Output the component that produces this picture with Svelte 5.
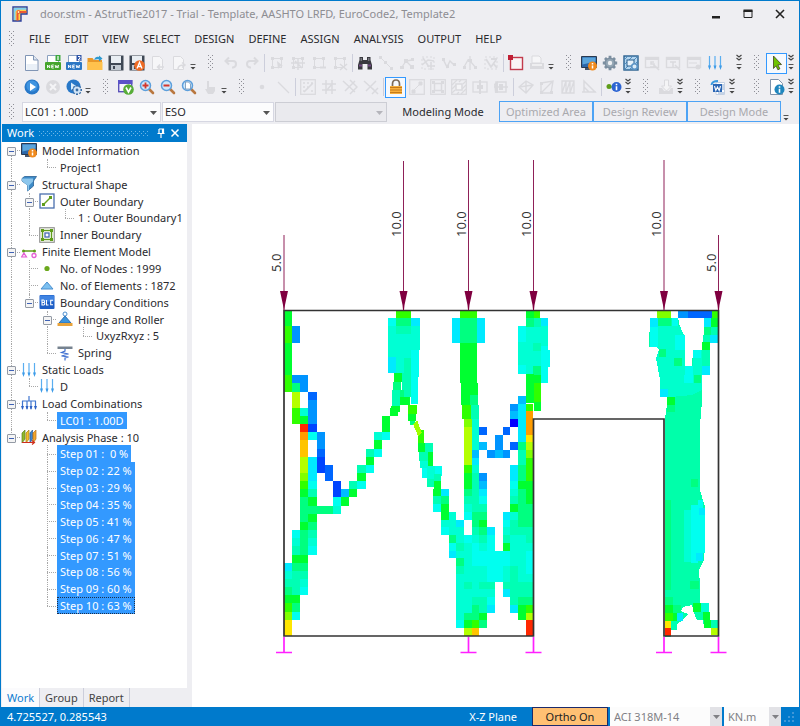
<script>
  const D = '#dadade';
  const arrows3 = '<path d="M2.5 1v12M8 1v12M13.5 1v12" stroke="#5aaef0" stroke-width="1.2"/><path d="M1 10.500h3l-1.500 4.500zM6.500 10.500h3L8 15zM12 10.500h3L13.500 15z" fill="#3d9be8"/>';
  const page = '<path d="M1.500 .5h8l4.500 4.500v10.500H1.500z" fill="#fff" stroke="#8095b5"/><path d="M2.500 9h10.500v6H2.500z" fill="#eaf0f7"/><path d="M9.500 .5v4.500h4.500" fill="#dfe7f2" stroke="#8095b5"/>';
  const folderPage = '<path d="M2.500 .5h8l3 3v6h-11z" fill="#fff" stroke="#8aa0bf"/>';
  const lens = '<path d="M10 10l4 4" stroke="#b9773f" stroke-width="2.600" stroke-linecap="round"/><circle cx="6.500" cy="6.500" r="5" fill="#cfe8fb" stroke="#5d9fdc" stroke-width="1.500"/>';
  const disk = '<path d="M.5 .5h15v15H.5z" fill="#3f4855"/><path d="M3 1h10v7H3z" fill="#e9eef3"/><path d="M3 10h10v5H3z" fill="#c2cad3"/><path d="M5 11h2v3H5z" fill="#3f4855"/>';
  const nodes = `<rect x="3.500" y="3.500" width="9" height="9" fill="none" stroke="${D}"/><path d="M2 2h3v3H2zM11 2h3v3h-3zM2 11h3v3H2z" fill="${D}"/>`;
  const win = `<rect x="1.500" y="2.500" width="13" height="10" fill="none" stroke="${D}" stroke-width="1.400"/><path d="M1 2h14v3H1z" fill="${D}"/>`;
  const frame = `<rect x=".7" y=".7" width="14.600" height="14.600" fill="none" stroke="${D}" stroke-width="1.300"/>`;
  const newTag = '<path d="M2.500 13V10l2.200 3V10M8.800 10H6.700v3h2.100M6.700 11.500h1.800M10.200 10l.7 3 1-2.400 1 2.400.7-3" fill="none" stroke="#fff" stroke-width=".9"/>';

  const icons = {
    app: '<path d="M1 1h14v7H9v7H1z" fill="#ffd24a" stroke="#2b3f9f" stroke-width="1.400"/><path d="M1.700 1.700h12.600v2H5L3.500 5.500V14H1.700z" fill="#7fd0f2"/><path d="M5.500 14.500V8.500Q5.500 6 8 6h6.500" fill="none" stroke="#ef5b33" stroke-width="2"/><circle cx="6.500" cy="6" r="1.500" fill="#fff2a8" stroke="#e0352b" stroke-width=".8"/>',
    page,
    new1: folderPage + '<path d="M10.500 0h5v6h-5z" fill="#3ea83e"/><path d="M13 1v4" stroke="#fff" stroke-width="1.200"/><rect y="7" width="16" height="8" rx="1" fill="#46a52c"/>' + newTag,
    new2: folderPage + '<path d="M10.500 0h5v6h-5z" fill="#2f55a8"/><path d="M12 1.500h2v1.500l-2 2h2.500" fill="none" stroke="#fff"/><rect y="7" width="16" height="8" rx="1" fill="#2d77c4"/>' + newTag,
    open: '<path d="M.5 3h5l1.500 2h8v10H.5z" fill="#e8982a"/><path d="M.5 7h15v8H.5z" fill="#ffc24d"/><path d="M7 5c1-3 3-4 5-3V.5l3.500 3-3.500 3V4.500c-2-.5-3.500 0-5 .5z" fill="#2e9ad0"/>',
    save: disk,
    saveAs: disk + '<circle cx="10.500" cy="10.500" r="5.300" fill="#ee6a24"/><path d="M8 13.500l2.500-6 2.500 6M9 11.500h3" fill="none" stroke="#fff" stroke-width="1.300"/>',
    pageBack: `<path d="M2.500 1.500h7l3 3v10h-10z" fill="#f6f6f8" stroke="${D}"/><path d="M14 12H8M10 9.500L7.500 12l2.500 2.500" fill="none" stroke="${D}" stroke-width="1.500"/>`,
    pageFwd: `<path d="M2.500 1.500h7l3 3v10h-10z" fill="#f6f6f8" stroke="${D}"/><path d="M7 14q0-4 6-4M11 7.500l3 2.500-3 2.500" fill="none" stroke="${D}" stroke-width="1.500"/>`,
    undo: `<path d="M3 6h7q3 0 3 3t-3 3.500H9M6 2.500L2.500 6 6 9.500" fill="none" stroke="${D}" stroke-width="2"/>`,
    redo: `<path d="M13 6H6Q3 6 3 9t3 3.500h1M10 2.500L13.500 6 10 9.500" fill="none" stroke="${D}" stroke-width="2"/>`,
    sel1: nodes + `<path d="M8 6l6 5-3 .5L9 14z" fill="${D}"/>`,
    sel2: nodes + `<path d="M1 8h14M8 4v11M5 6l7 7" stroke="${D}" stroke-width="1.500"/>`,
    sel3: nodes + `<path d="M9 12.500h6" stroke="${D}" stroke-width="2"/>`,
    sel4: nodes + `<path d="M8 9l7 6M15 9l-7 6" stroke="${D}" stroke-width="1.500"/>`,
    find: '<path d="M2.500 2h3.500v3h4V2h3.500v3l1.500 5v4.500h-4.500V9h-5v5.500H1V10l1.500-5z" fill="#39393f"/><path d="M2 9.500h3v2H2zM11 9.500h3v2h-3z" fill="#744b86"/><path d="M3.500 3h1.500v3H3.500zM11 3h1.500v3H11z" fill="#77777f"/>',
    segment: `<path d="M2 2l11 11" stroke="${D}"/><path d="M1 1h3v3H1zM12 12h3v3h-3zM6 6h3v3H6z" fill="${D}"/>`,
    link: `<path d="M3 12l4-6 6-1M7 6l6 6" stroke="${D}" fill="none" stroke-width="1.300"/><path d="M1 11h4v3H1zM5 4h4v4H5zM12 3h3v3h-3zM11 10h4v4h-4z" fill="${D}"/>`,
    move: `<rect x="2" y="2" width="12" height="12" fill="none" stroke="${D}" stroke-dasharray="2 2"/><path d="M3 3l6 9M11 7v8M7 11h8M2 10l6-5 6 1" stroke="${D}" stroke-width="1.600" fill="none"/>`,
    wave: `<path d="M2 4l4 8 3-6 3 3h3" fill="none" stroke="${D}" stroke-width="1.500"/><path d="M1 3h3v3H1zM5 10h3v3H5zM12 8h3v3h-3z" fill="${D}"/>`,
    split: `<path d="M8 1v14M2 12l4-7 3 2 5 6" fill="none" stroke="${D}" stroke-width="1.300"/><path d="M1 11h3v3H1zM12 11h3v3h-3zM6 4h4v3H6z" fill="${D}"/>`,
    mirror: `<rect x="2" y="2" width="12" height="12" fill="none" stroke="${D}" stroke-dasharray="2 2"/><path d="M3 4l5 8 5-7M10 8l4 5M8 4h6" stroke="${D}" stroke-width="1.800" fill="none"/>`,
    square: '<rect x="2.500" y="2.500" width="12" height="12" fill="#faf4f5" stroke="#c23a4c" stroke-width="1.400"/><path d="M0 0h5v5H0z" fill="#c01f35"/>',
    print: `<path d="M3 1h7l2 2v5H3z" fill="#f6f6f8" stroke="${D}"/><path d="M1 8h14v6H1z" fill="${D}"/><path d="M3 10h10" stroke="#f4f4f6" stroke-width="1.500"/>`,
    monitor: '<path d="M.5 1.500h15v11H.5z" fill="#2c66a8" stroke="#2a3a50"/><path d="M1.500 2.500h13v4l-13 3z" fill="#5aa5dc"/><path d="M4 13h6v2H4z" fill="#48566a"/><circle cx="11.500" cy="11" r="4.500" fill="#f08a1d"/><path d="M11.500 8v1.500M11.500 10.500v3" stroke="#fff" stroke-width="1.500"/>',
    gear: '<path d="M8 .8v14.400M.8 8h14.400M3 3l10 10M13 3L3 13" stroke="#7c8fa0" stroke-width="2.800"/><circle cx="8" cy="8" r="5.600" fill="#7c8fa0"/><circle cx="8" cy="8" r="4" fill="#94a6b4"/><circle cx="8" cy="8" r="2.200" fill="#eef0f3"/>',
    hatch: '<rect x="1" y="1" width="14" height="14" fill="#b4d6f0" stroke="#28608f" stroke-width="1.400"/><path d="M1 5l4-4M1 10l9-9M1 15L15 1M6 15l9-9" stroke="#4a86b8" stroke-width=".9"/><rect x="4" y="5" width="7" height="6" fill="#e9f3fb" stroke="#28608f"/><circle cx="11.500" cy="11.500" r="2.800" fill="#dcecf8" stroke="#5b94c6" stroke-width="1.600"/>',
    winS: win + `<path d="M10 7H7v2h3v3H6M10 10l5 5" fill="none" stroke="${D}" stroke-width="1.500"/>`,
    winT: win + `<path d="M5 7h6M8 7v6M10 10l5 5" fill="none" stroke="${D}" stroke-width="1.500"/>`,
    winX: win + `<path d="M3 8h8" stroke="${D}"/><circle cx="12" cy="12" r="2.500" fill="${D}"/>`,
    loads: arrows3,
    cursor: '<path d="M4.500 1l8 8.500-3.600.3 2 4-2 1-1.900-4-2.500 2.700z" fill="#6fc400" stroke="#41421c" stroke-width=".8"/>',
    play: '<circle cx="8" cy="8" r="7.500" fill="#2878c8"/><circle cx="8" cy="7" r="5.600" fill="#3f94e0"/><path d="M6 4l6 4-6 4z" fill="#fff"/>',
    stop: `<circle cx="8" cy="8" r="7" fill="${D}"/><path d="M5 5l6 6M11 5l-6 6" stroke="#f4f4f6" stroke-width="2"/>`,
    runGear: '<circle cx="7.500" cy="7.500" r="7" fill="#2878c8"/><path d="M5 3.500l5 3.500-5 4z" fill="#d9edfc"/><path d="M11 6v10M6 11h10M7.500 7.500l7 7M14.500 7.500l-7 7" stroke="#3a6da5" stroke-width="2"/><circle cx="11" cy="11" r="3.500" fill="#cfe3f5"/><circle cx="11" cy="11" r="1.400" fill="#3a6da5"/>',
    verify: '<rect x=".7" y="1.700" width="13" height="11" fill="#f6f4ff" stroke="#5a52b8" stroke-width="1.400"/><path d="M0 1h14.400v4H0z" fill="#5a52c8"/><circle cx="10.500" cy="10.500" r="5.300" fill="#57ad38"/><path d="M8 8.500l2.500 4.500L13 8.500" fill="none" stroke="#fff" stroke-width="1.600"/>',
    zoomIn: lens + '<path d="M6.500 3.500v6M3.500 6.500h6" stroke="#d3372c" stroke-width="1.800"/>',
    zoomOut: lens + '<path d="M3.500 6.500h6" stroke="#d3372c" stroke-width="2"/>',
    zoomFit: lens + '<path d="M4.500 3h3l2 2v5h-5z" fill="#fff" stroke="#6f8fb2" stroke-width=".8"/>',
    hand: `<path d="M5 2h2v6h6v4l-2 3H6l-3-5h2z" fill="${D}"/>`,
    dot: `<circle cx="8" cy="8" r="2.300" fill="${D}"/>`,
    line: `<path d="M3 3l11 11" stroke="${D}" stroke-width="1.200"/>`,
    draw: frame + `<path d="M3 4h2M7 4h2M11 4h2M3 8h2M7 8h2M3 12h2M11 12h2M4 13l9-9" stroke="${D}" stroke-width="1.600"/>`,
    hash: `<path d="M5 1v14M11 1v14M1 5h14M1 11h14M12 4L5 12" stroke="${D}" stroke-width="1.500"/>`,
    cross1: `<path d="M1 2l12 11M13 2L3 12M8 1l7 7-7 7" stroke="${D}" stroke-width="1.500" fill="none"/>`,
    cross2: `<path d="M1 2l12 11M13 2L3 12M9 9l6 6M15 9l-6 6" stroke="${D}" stroke-width="1.500" fill="none"/>`,
    lock: '<path d="M4.500 8V5q0-4 3.500-4t3.500 4v3" fill="none" stroke="#7c6a58" stroke-width="1.700"/><path d="M2 7h12v8H2z" fill="#f8b03c"/><path d="M2 8.500h12M2 11h12M2 13.500h12" stroke="#c57a1c"/>',
    box1: frame + `<path d="M4 12l8-8M3 11h3v3H3zM10 3h3v3h-3z" stroke="${D}" fill="${D}"/>`,
    box2: frame + `<rect x="4.500" y="4.500" width="7" height="7" fill="none" stroke="${D}" stroke-width="1.500"/><path d="M2 2h3v3H2zM11 2h3v3h-3zM2 11h3v3H2zM11 11h3v3h-3z" fill="${D}"/>`,
    box3: frame + `<path d="M1 6l5-5M1 10l4-4M10 1L8 3M15 6l-4 4M15 10l-5 5M6 15l2-2M1 14l3-3M15 2l-3 3" stroke="${D}" stroke-width="1.200"/><rect x="5" y="5" width="6" height="6" fill="#f4f4f6" stroke="${D}" stroke-width="1.500"/>`,
    box4: `<rect x="1" y="3" width="14" height="10" fill="none" stroke="${D}" stroke-width="1.300"/><path d="M5 6h6v4H5zM7 1h2v14H7z" fill="${D}"/>`,
    box5: `<path d="M3 3h10v10H3z" fill="none" stroke="${D}" stroke-width="1.500"/><path d="M6 5h4v6H6zM1 5l4-3v12H2z" fill="${D}"/><path d="M1 8h14" stroke="${D}" stroke-width="1.500"/>`,
    mesh1: `<path d="M1 8l7-6 7 4-7 8zM8 2v12M1 8l14-2" fill="none" stroke="${D}" stroke-width="1.400"/>`,
    mesh2: `<path d="M2 4l12-2-2 12H2zM2 14L14 2" fill="none" stroke="${D}" stroke-width="1.400"/><path d="M1 3h3v3H1zM1 12h3v3H1zM11 12h3v3h-3z" fill="${D}"/>`,
    mesh3: `<path d="M2 2h12v12H2zM6 2v12M10 2v12M2 14L6 2M6 14l4-12M10 14l4-12" fill="none" stroke="${D}" stroke-width="1.300"/>`,
    mesh4: `<path d="M3 2v11h11zM3 8l5 5M1 13h14" fill="none" stroke="${D}" stroke-width="1.500"/>`,
    nodeInfo: '<circle cx="3" cy="7.500" r="2.500" fill="#5f9d1a"/><path d="M4 8h5" stroke="#5f9d1a"/><circle cx="10.500" cy="8" r="5" fill="#2c64d2"/><path d="M10.500 4.800v1.400M10.500 7.300v4" stroke="#fff" stroke-width="1.600"/>',
    download: `<path d="M6.500 1h4v6h3l-5 5-5-5h3z" fill="#f4f4f6" stroke="${D}"/><path d="M1 9h3l2 3h5l2-3h2v6H1z" fill="${D}"/>`,
    word: '<path d="M6 3.500h8.500v12H6z" fill="#fff" stroke="#c4d0e2"/><path d="M12 6h2M12 8h2M12 10h2M8 14h6" stroke="#8aa8d0"/><path d="M3 5h9v8H3z" fill="#2b66b5"/><path d="M4.500 7l1.300 4.500 1.700-3.500 1.700 3.500L10.500 7" fill="none" stroke="#fff" stroke-width="1.100"/><path d="M1.500 6Q2 2 8 2" fill="none" stroke="#3c9be0" stroke-width="2"/>',
    pageInfo: '<path d="M1.500 .5h8l4 4v11h-12z" fill="#fff" stroke="#7f93ab"/><circle cx="10.500" cy="10.500" r="5" fill="#1f86be"/><path d="M10.500 7.300v1.400M10.500 9.800v4" stroke="#fff" stroke-width="1.600"/>',
    shape: '<path d="M1 2.500L3.500.5h12l-2 3-1 1.500v5l-6 5v-6L1 5z" fill="#3d8bc8" stroke="#2a5f92" stroke-width=".8"/><path d="M1 2.500h11v3l-4 4V14l-1.500 1V9.500L1 5z" fill="#8cc6ec"/>',
    outer: '<rect x="1" y="1" width="14" height="14" fill="#fff" stroke="#4a6fae" stroke-width="1.300"/><path d="M5 11l6-6" stroke="#6aa31f" stroke-width="1.400"/><path d="M3 10h3v3H3zM10 3h3v3h-3z" fill="#5f9d1a"/>',
    inner: '<rect x=".7" y=".7" width="14.600" height="14.600" fill="#eef3e6" stroke="#8a8a8a"/><rect x="3.500" y="3.500" width="9" height="9" fill="none" stroke="#5f9d1a" stroke-width="1.200"/><path d="M2 2h3v3H2zM11 2h3v3h-3zM2 11h3v3H2zM11 11h3v3h-3z" fill="#5f9d1a"/><rect x="6" y="6" width="4" height="4" fill="#fff" stroke="#3d62b5" stroke-width="1.200"/>',
    fem: '<path d="M2 7h12" stroke="#5f9d1a" stroke-width="1.500"/><circle cx="2.500" cy="7" r="1.500" fill="#5f9d1a"/><circle cx="13.500" cy="7" r="1.500" fill="#5f9d1a"/><path d="M3 9l2.500 4h-5z" fill="#fbe3f8" stroke="#e45fd4" stroke-width="1.200"/><circle cx="13" cy="11.500" r="2" fill="none" stroke="#e45fd4" stroke-width="1.300"/>',
    node: '<circle cx="8" cy="8.500" r="2.600" fill="#6ba81c"/>',
    element: '<path d="M8 5l6 7H2z" fill="#7cc0f0" stroke="#4a90d0"/>',
    bc: '<rect x=".5" y="1" width="15" height="14" rx="1" fill="#1f5fc6"/><rect x="1" y="1.500" width="14" height="6" fill="#3f83e2"/><path d="M3 6v5h1.800q1-.2 1-1.300T4.800 8.500H3h1.500q1-.2 1-1.200T4.500 6zM7.500 6v5h2M14 6.300h-2.300v4.400H14" fill="none" stroke="#fff" stroke-width="1.100"/>',
    hinge: '<path d="M8 5l6 7H2z" fill="#3d95de" stroke="#2b6db2"/><circle cx="8" cy="3" r="2" fill="#fff" stroke="#4d8fd0"/><path d="M.5 12h15v3H.5z" fill="#e8a33a"/>',
    spring: '<path d="M.5 1.500h15v2.500H.5z" fill="#76828f"/><path d="M8 4v2L4.500 7.500l7 1.500-7 2 7 1L8 13v2.500" fill="none" stroke="#3f6fd0" stroke-width="1.200"/>',
    combo: '<path d="M1.500 6v8M6 6v8M10 6v8M14.500 6v8M1 6h14M8 1v5" stroke="#3f76d0" stroke-width="1.200"/><path d="M0 11h3l-1.500 4zM4.500 11h3L6 15zM8.500 11h3L10 15zM13 11h3l-1.500 4z" fill="#2f62c4"/>',
    phase: '<path d="M1 4l3-3v9l-3 4z" fill="#8fb92a" stroke="#5e7e1c" stroke-width=".7"/><path d="M5 4l3-3v9l-3 4z" fill="#f2c12b" stroke="#a47a12" stroke-width=".7"/><path d="M9 4l2.500-3v9L9 14z" fill="#3f86cf" stroke="#2a5a90" stroke-width=".7"/><path d="M12 4l3-3v9l-3 4z" fill="#f2a62b" stroke="#b4701c" stroke-width=".7"/><path d="M1 13.500h12M11 11.500l2.500 2-2.500 2" fill="none" stroke="#cf2e1f" stroke-width="1.200"/>'
  };

  const menus = ['FILE', 'EDIT', 'VIEW', 'SELECT', 'DESIGN', 'DEFINE', 'ASSIGN', 'ANALYSIS', 'OUTPUT', 'HELP'];

  const toolbars = [
    [
      { items: 'page new1 new2 open save saveAs pageBack pageFwd', more: 'tail' },
      { items: 'undo redo | sel1 sel2 sel3 sel4 | find segment link move wave split mirror | square print', more: 'tail' },
      { items: 'monitor gear hatch winS winT winX loads', more: 'chev', spaced: true },
      { items: 'cursor', more: 'chev', last: true }
    ],
    [
      { items: 'play stop runGear', more: 'tail' },
      { items: 'verify zoomIn zoomOut zoomFit hand', more: 'tail' },
      { items: 'dot line | draw hash cross1 cross2 | lock box1 box2 box3 box4 box5 | mesh1 mesh2 mesh3 mesh4 | nodeInfo', more: 'chev' },
      { items: 'download', more: 'chev' },
      { items: 'word', more: 'chev' },
      { items: 'pageInfo', more: 'chev', last: true }
    ]
  ];
  const active = ['cursor', 'lock'];

  // guides: one letter per indent column (i = line, t = branch, l = last branch, f = first branch, - = blank)
  const tree = [
    { g: 'f', open: true, icon: 'monitor', text: 'Model Information' },
    { g: 'i-l', text: 'Project1' },
    { g: 't', open: true, icon: 'shape', text: 'Structural Shape' },
    { g: 'it', open: true, icon: 'outer', text: 'Outer Boundary' },
    { g: 'ii-l', text: '1 : Outer Boundary1' },
    { g: 'il', icon: 'inner', text: 'Inner Boundary' },
    { g: 't', open: true, icon: 'fem', text: 'Finite Element Model' },
    { g: 'it', icon: 'node', text: 'No. of Nodes : 1999' },
    { g: 'it', icon: 'element', text: 'No. of Elements : 1872' },
    { g: 'il', open: true, icon: 'bc', text: 'Boundary Conditions' },
    { g: 'i-t', open: true, icon: 'hinge', text: 'Hinge and Roller' },
    { g: 'i-i-l', text: 'UxyzRxyz : 5' },
    { g: 'i-l', icon: 'spring', text: 'Spring' },
    { g: 't', open: true, icon: 'loads', text: 'Static Loads' },
    { g: 'il', icon: 'loads', text: 'D' },
    { g: 't', open: true, icon: 'combo', text: 'Load Combinations' },
    { g: 'i-l', text: 'LC01 : 1.00D', sel: true },
    { g: 'l', open: true, icon: 'phase', text: 'Analysis Phase : 10' },
    ...['\u00a00', 22, 29, 35, 41, 47, 51, 56, 60, 63].map((p, n) => ({
      g: n === 9 ? '--l' : '--t',
      text: `Step ${String(n + 1).padStart(2, '0')} : ${p} %`,
      sel: true,
      focus: n === 9
    }))
  ];

  const ramp = {
    r: '#ff2800', o: '#ff9c00', O: '#ffc400', y: '#ffe600', l: '#b4ff00', L: '#80ff00', g: '#30ff00',
    G: '#00ff30', s: '#00ff80', t: '#00ffb4', T: '#00ffd4', c: '#00fff0', C: '#00eaff', b: '#00bcff',
    B: '#0094ff', d: '#0066ff', D: '#0044ff', N: '#0000ff'
  };

  const cells = (rows, x0, dx, y0, dy) =>
    rows.flatMap((row, j) =>
      [...row].flatMap((k, i) =>
        ramp[k]
          ? [{ x: Math.round(x0 + i * dx), y: Math.round(y0 + j * dy), w: Math.round(x0 + (i + 1) * dx) - Math.round(x0 + i * dx), h: Math.round(y0 + (j + 1) * dy) - Math.round(y0 + j * dy), f: ramp[k] }]
          : []
      )
    );

  const leftMesh = cells(
    [
      'G', 'G', 'gB', 'gB', 'G', 'G', 'G', 'G', 'gBB', 'gsB', '.l.d', '.l.B',
      '.gTB.........G', '.gGB........G', '..rD........G', '..ocB......Tc', '..O.B......G', '..O.d.....tc',
      '..lCD.....G', '..lCDd...tc', '..LC.d...G', '..gc..D.tc', '..Gt..DbG', '..sG..cG', '..ssssT',
      '..sG', '..Gs', '.cst', '.TsT', '.tsc', '.GG', 'Css', 'Ttt', 'ttT', 'stc', 'GG', 'gs', 'Lc', 'y', 'y'
    ],
    284, 8.15, 310, 8.15
  );

  const midMesh = cells(
    [
      '...........b.', '..........BCg', '..........bCo', '....LT....NCo', '....lTd..d.Co', '....lT..B..Cy',
      '....lTb.B.dsl', '....lb.BbB.tL', '....lC.....tg', '....gT....Csg', '....GtB...Csg', '....Gtb...cGG',
      'GC..stC...TsG', 'ts..ttc...tsG', 'cG..Ttt...Gss', '.GT.css..CTss', '.TTC.sG..ctss', '.cTT.tsC.Tttt',
      '..sTcTtc.tTTt', '..ctTcTc.GTTT', '..CTTcccccTTc', '...sTcccccTTc', '...tTTTccTtTc', '...TTTTccTtTT',
      '...TtTtt.tttt', '...TTTTT.Cttt', '...TTttc..tss', '...TTstC..CGg', '...TssG....Gl', '...cGgs.....r', '....lO......r'
    ],
    433.1, 7.72, 395.8, 7.74
  );

  const patches = `396 311 15 7 g|388 318 8 8 c|396 318 15 8 s|411 318 9 8 C|388 326 8 31 T|388 357 8 16 C|396 326 8 47 T|404 326 7 47 T|411 326 9 24 T|411 350 8 27 c|396 326 15 8 t|404 358 7 15 t
394 373 8 9 G|393 382 8 8 s|392 390 8 16 t|391 406 9 6 G|402 373 9 24 t|400 390 4 8 s|400 397 10 8 G|411 376 7 28 c|408 405 9 9 g|408 414 8 7 G|410 421 5 4 s|418 430 6 13 g|418 443 7 9 G|425 443 8 9 t|419 452 9 9 t|428 452 5 14 G|420 461 8 7 T|427 466 8 13 T|422 468 5 10 c|435 466 7 10 c|427 479 7 8 t|434 474 7 7 t|434 481 7 8 G
460 311 17 7 g|452 318 8 25 C|460 318 17 25 s|477 318 8 25 C|460 343 17 40 G|461 383 9 22 G|470 383 8 12 G|470 395 8 10 s|462 405 9 14 g|471 405 8 14 t
526 311 8 7 G|534 311 6 7 g|526 318 8 9 s|534 318 7 9 t|541 318 7 8 C|518 326 8 16 c|518 342 8 23 T|518 365 8 9 c|526 327 15 47 T|541 326 7 20 T|541 346 7 37 c|548 350 2 17 c|533 343 8 8 t|533 366 8 9 s|526 374 8 29 G|534 375 7 36 G|534 383 7 19 g`;

  const legPatches = `657 311 14 7 L|678 311 10 7 B|688 311 24 7 d|712 311 6 7 g|711 318 7 9 G|711 327 7 8 t|710 335 8 8 C|704 318 7 9 C|704 327 7 8 s|703 335 7 7 t|702 342 8 8 G|702 350 8 16 t|702 366 8 9 C
650 318 8 9 C|650 327 8 20 c|658 318 13 8 s|672 318 6 8 c|659 349 7 8 s|675 335 10 15 c|674 358 8 8 s|685 366 8 9 c|684 375 9 8 c|693 350 8 8 c|660 389 8 8 C|667 397 8 8 G|667 405 8 7 s|694 375 7 8 s|691 479 7 8 s
665 500 6 90 s|684 510 7 52 T|691 505 7 58 c|698 500 5 8 c|698 508 7 45 c|699 508 6 7 C|696 553 7 8 C|690 581 9 8 s|665 597 8 8 s|665 605 8 8 G|673 605 8 8 s|665 613 8 8 g|673 613 5 8 G|665 621 6 7 y|665 628 6 8 r|671 621 6 8 t|677 613 6 8 C|693 603 8 9 G|701 603 8 9 T|703 612 7 8 G|704 620 7 8 G|711 620 7 8 t|711 628 7 7 l`;

  const parse = (text) =>
    text.split(/[|\n]/).map((p) => {
      const [x, y, w, h, k] = p.trim().split(' ');
      return { x, y, w, h, f: ramp[k] };
    });

  const meshA = [...leftMesh, ...midMesh, ...parse(patches)];
  const meshB = parse(legPatches);

  const loads = [
    { x: 284, top: 235, label: '5.0', base: 272 },
    { x: 403.5, top: 161, label: '10.0', base: 237 },
    { x: 468.5, top: 160, label: '10.0', base: 237 },
    { x: 533.5, top: 160, label: '10.0', base: 237 },
    { x: 664, top: 160, label: '10.0', base: 237 },
    { x: 718.5, top: 235, label: '5.0', base: 272 }
  ];
  const supports = [284, 468.5, 533.5, 664, 718.5];
</script>

{#snippet icon(name)}
  <svg class="icon" viewBox="0 0 16 16" aria-hidden="true">{@html icons[name]}</svg>
{/snippet}

{#snippet arrow()}
  <svg class="arrow" viewBox="0 0 7 4" aria-hidden="true"><path d="M0 0h7L3.500 4z" fill="currentColor" /></svg>
{/snippet}

{#snippet overflow(kind)}
  <button class="overflow" aria-label="More tools">
    <svg viewBox="0 0 8 16" aria-hidden="true">
      {#if kind === 'chev'}
        <path d="M1.500 0l2.500 2 2.500-2M1.500 3l2.500 2 2.500-2" fill="none" stroke="#444" stroke-width="1.200" />
      {/if}
      <path d="M1.500 9.500h5" stroke="#555" />
      <path d="M1.500 12h5L4 14.500z" fill="#444" />
    </svg>
  </button>
{/snippet}

<div class="window">
  <header class="title">
    {@render icon('app')}
    <h1>door.stm - AStrutTie2017 - Trial - Template, AASHTO LRFD, EuroCode2, Template2</h1>
    <div class="controls">
      <button aria-label="Minimize"><svg viewBox="0 0 12 12"><path d="M2 8h8v2.500H2z" fill="#222" /></svg></button>
      <button aria-label="Maximize"><svg viewBox="0 0 12 12"><path d="M2 2.500h8v7H2z" fill="none" stroke="#222" /><path d="M1.500 1.500h9v2.500h-9z" fill="#222" /></svg></button>
      <button aria-label="Close"><svg viewBox="0 0 12 12"><path d="M2 2l8 8M10 2l-8 8" stroke="#222" stroke-width="1.600" /></svg></button>
    </div>
  </header>

  <nav class="menu">
    <span class="grip"></span>
    {#each menus as m}<button>{m}</button>{/each}
  </nav>

  {#each toolbars as bar}
    <div class="toolbar">
      {#each bar as group}
        <div class="group" class:last={group.last} class:spaced={group.spaced}>
          <span class="grip"></span>
          <div class="tools">
            {#each group.items.split(' ') as name}
              {#if name === '|'}
                <span class="sep"></span>
              {:else}
                <button class="tool" class:active={active.includes(name)} aria-label={name}>{@render icon(name)}</button>
              {/if}
            {/each}
          </div>
          {@render overflow(group.more)}
        </div>
      {/each}
    </div>
  {/each}

  <div class="toolbar modes">
    <span class="grip"></span>
    <div class="combos">
      <label class="combo wide"><select aria-label="Load combination"><option>LC01 : 1.00D</option></select>{@render arrow()}</label>
      <label class="combo"><select aria-label="Method"><option>ESO</option></select>{@render arrow()}</label>
      <label class="combo off"><select aria-label="Step" disabled><option></option></select>{@render arrow()}</label>
    </div>
    <button class="current">Modeling Mode</button>
    <div class="modebtns">
      <button>Optimized Area</button>
      <button>Design Review</button>
      <button>Design Mode</button>
    </div>
    {@render overflow('tail')}
  </div>

  <main>
    <aside>
      <div class="panelhead">
        <h2>Work</h2>
        <span class="dots"></span>
        <button aria-label="Pin"><svg viewBox="0 0 10 10"><path d="M3 1h4.500v4.500M3 1v4.500M1.500 5.500h7M5 5.500V10M6.500 1v4.500" fill="none" stroke="#fff" stroke-width="1.200" /></svg></button>
        <button aria-label="Close panel"><svg viewBox="0 0 10 10"><path d="M1.500 1.500l7 7M8.500 1.500l-7 7" stroke="#fff" stroke-width="1.500" /></svg></button>
      </div>
      <div class="treebox">
        <ul class="tree">
          {#each tree as row}
            <li>
              {#each row.g as g, i}
                <span class="guide {g === '-' ? 'blank' : g}">
                  {#if row.open && i === row.g.length - 1}<button class="expander" aria-label="Collapse"></button>{/if}
                </span>
              {/each}
              {#if row.icon}{@render icon(row.icon)}{/if}
              <span class="label" class:sel={row.sel} class:focus={row.focus}>{row.text}</span>
            </li>
          {/each}
        </ul>
      </div>
      <div class="tabs">
        <button class="on">Work</button>
        <button>Group</button>
        <button>Report</button>
      </div>
    </aside>

    <section class="canvas">
      <svg viewBox="192 124 607 583" role="img" aria-label="Truss optimisation result">
        <g shape-rendering="crispEdges">
          {#each meshA as c}<rect x={c.x} y={c.y} width={c.w} height={c.h} fill={c.f} />{/each}
          <path d="M413 424l4-4 5 13-4 3z" fill="#a0ff00" />
          <path d="M650 318h28l2 9 5 11v28h7l1-16h9v45l-1 24h-1v71l5 17v23l-1 30-5 10 1 15v18h9l1 17h7v15h-6v-7h-7l-1-8h-6l-3-7-2-8-9 2-2 4 7 3-5 6-6 4v6h-6v7h-6V419l3-22h-7v-17l-4-22 3-8-3-3h-8z" fill="#00ffaa" />
          <path d="M650 326h30l5 12v28h8v-16h9v40l-10 5-22 2h-10v-17l-4-22 3-8-3-3h-6z" fill="#00ffcc" />
          {#each meshB as c}<rect x={c.x} y={c.y} width={c.w} height={c.h} fill={c.f} />{/each}
        </g>
        <path d="M284 310.500H718.500V636H664V419H533.500V636H284Z" fill="none" stroke="#333" stroke-width="1.700" />
        {#each supports as x}
          <path d="M{x} 637V652.500M{x - 8} 652.500h16" stroke="#ff20ff" stroke-width="1.700" />
        {/each}
        {#each loads as l}
          <path d="M{l.x} {l.top}V300" stroke="#8f2058" stroke-width="1" />
          <path d="M{l.x - 4} 291h8l-3 14-.5 5h-1l-.5-5z" fill="#800040" />
          <text transform="translate({l.x - 3} {l.base}) rotate(-90)">{l.label}</text>
        {/each}
      </svg>
    </section>
  </main>

  <footer>
    <span class="coords">4.725527, 0.285543</span>
    <span>X-Z Plane</span>
    <button class="ortho">Ortho On</button>
    <label class="unit code"><select aria-label="Design code"><option>ACI 318M-14</option></select><span>{@render arrow()}</span></label>
    <label class="unit"><select aria-label="Units"><option>KN.m</option></select><span>{@render arrow()}</span></label>
    <svg class="resize" viewBox="0 0 12 12" aria-hidden="true"><path d="M9 1h2v2H9zM5 5h2v2H5zM9 5h2v2H9zM1 9h2v2H1zM5 9h2v2H5zM9 9h2v2H9z" fill="#3f97d8" /></svg>
  </footer>
</div>

<style>
  .window {
    display: flex;
    flex-direction: column;
    min-height: 100vh;
    box-sizing: border-box;
    border: 1px solid #007acc;
    border-bottom: 0;
    background: #eeeef2;
    color: #2a2a2e;
    font: 11px/16px "Noto Sans", sans-serif;
  }
  button, select { font: inherit; color: inherit; }
  button { border: 0; padding: 0; background: none; }
  h1, h2 { margin: 0; font-size: 11px; font-weight: 400; white-space: nowrap; }
  .icon { display: block; width: 16px; height: 16px; flex: none; }

  .title { display: flex; align-items: center; height: 26px; padding: 0 3px 0 11px; }
  .title h1 { flex: 1; margin-left: 12px; color: #8d8d92; }
  .controls { display: flex; }
  .controls button { width: 32px; display: grid; place-items: center; }
  .controls svg { width: 12px; height: 12px; }

  .grip {
    flex: none;
    width: 6px;
    height: 16px;
    background:
      conic-gradient(from 270deg at 1px 1px, #8e8e96 90deg, transparent 0) 0 0 / 4px 4px,
      conic-gradient(from 270deg at 1px 1px, #8e8e96 90deg, transparent 0) 2px 2px / 4px 4px;
  }
  .menu { display: flex; align-items: center; height: 24px; padding-left: 8px; }
  .menu button { margin-left: 14px; }

  .toolbar { display: flex; align-items: center; gap: 11px; height: 24px; padding: 0 4px 0 8px; }
  .group { display: flex; align-items: center; }
  .group.last { margin-left: auto; }
  .tools { display: flex; align-items: center; margin-left: 6px; }
  .spaced .tools { margin-right: 10px; }
  .tool { display: grid; place-items: center; width: 21px; height: 21px; box-sizing: border-box; }
  .tool.active { border: 1px solid #3399ff; background: #f6f9fd; }
  .sep { width: 1px; height: 18px; margin: 0 1px 0 2px; background: #cccedb; }
  .overflow { width: 8px; height: 16px; }
  .overflow svg { display: block; width: 8px; height: 16px; overflow: visible; }

  .modes { gap: 0; height: 25px; }
  .combos { display: flex; gap: 1px; margin-left: 7px; }
  .combo { position: relative; display: flex; width: 112px; color: #555; }
  .combo.wide { width: 139px; }
  .combo select {
    appearance: none;
    width: 100%;
    height: 20px;
    padding: 0 2px;
    border: 1px solid #d6d7e2;
    border-radius: 0;
    background: #fcfcfd;
    color: #2a2a2e;
  }
  .combo.off { color: #b5b5bb; }
  .combo.off select { background: #eaeaee; border-color: #cccdd4; opacity: 1; }
  .arrow { width: 7px; height: 4px; }
  .combo .arrow { position: absolute; right: 4px; top: 9px; }
  .current { flex: 1; min-width: 90px; text-align: center; white-space: nowrap; }
  .modebtns { display: flex; margin-right: 1px; }
  .modebtns button { width: 94px; height: 21px; box-sizing: border-box; border: 1px solid #4da3f5; color: #a9a9ae; white-space: nowrap; }
  .modes .overflow { margin: 4px 5px 0 0; }

  main { flex: 1; display: flex; background: #fff; }
  aside { display: flex; flex-direction: column; width: 191px; box-sizing: border-box; padding: 0 5px 0 1px; background: #eeeef2; }
  .panelhead { display: flex; align-items: center; height: 18px; padding: 0 7px 0 5px; background: #007acc; color: #fff; }
  .dots {
    flex: 1;
    height: 5px;
    margin: 0 4px 0 5px;
    background:
      conic-gradient(from 270deg at 1px 1px, #6db6e6 90deg, transparent 0) 0 0 / 4px 4px,
      conic-gradient(from 270deg at 1px 1px, #6db6e6 90deg, transparent 0) 2px 2px / 4px 4px;
  }
  .panelhead button { width: 10px; height: 10px; margin-left: 4px; }
  .panelhead svg { display: block; }
  .treebox { flex: 1; background: #fff; }
  .tree { display: grid; grid-auto-rows: 1fr; height: 472px; margin: 0; padding: 0; list-style: none; }
  li { display: flex; align-items: center; white-space: nowrap; min-height: 0; }
  .guide { position: relative; flex: none; width: 18px; height: 100%; }
  .guide::before, .guide::after { content: ""; position: absolute; left: 9px; }
  .guide::before { top: 0; bottom: 0; border-left: 1px dotted #a8a8a8; }
  .guide::after { top: 50%; width: 9px; border-top: 1px dotted #a8a8a8; }
  .l::before { bottom: 50%; }
  .f::before { top: 50%; }
  .i::after, .blank::after, .blank::before { display: none; }
  .expander {
    position: absolute;
    z-index: 1;
    left: 5px;
    top: 5px;
    width: 9px;
    height: 9px;
    border: 1px solid #939aa5;
    border-radius: 1px;
    background: linear-gradient(#3f62b5, #3f62b5) center / 5px 1px no-repeat, #f4f4f4;
  }
  li .icon { margin: 0 1px; }
  .label { margin-left: 1px; padding: 0 3px; line-height: 17px; }
  .sel { background: #3399ff; color: #fff; }
  .focus { outline: 1px dotted #1c2f4a; outline-offset: -1px; }
  .tabs { display: flex; height: 19px; color: #444; }
  .tabs button { padding: 0 5px; border-right: 1px solid #cccedb; }
  .tabs .on { background: #fbfbfd; color: #0e7bd0; }

  .canvas { flex: 1; display: flex; min-width: 0; }
  .canvas svg { width: 100%; min-height: 0; }
  .canvas text { font: 13px "Noto Sans", sans-serif; fill: #333; }

  footer { display: flex; align-items: center; height: 19px; padding: 0 4px 0 6px; background: #007acc; color: #fff; }
  .coords { flex: 1; }
  .ortho { width: 76px; height: 19px; margin: 0 2px 0 15px; box-sizing: border-box; border: 1px solid #1b2a6b; background: #ffc073; color: #222; }
  .unit { display: flex; width: 57px; height: 19px; margin-right: 2px; background: #fcfcfc; color: #808085; }
  .unit.code { width: 112px; }
  .unit select { appearance: none; flex: 1; min-width: 0; padding: 0 4px; border: 0; background: none; }
  .unit span { display: grid; place-items: center; width: 12px; background: #e2e2e6; }
  .resize { width: 12px; height: 12px; margin-left: auto; }
</style>
